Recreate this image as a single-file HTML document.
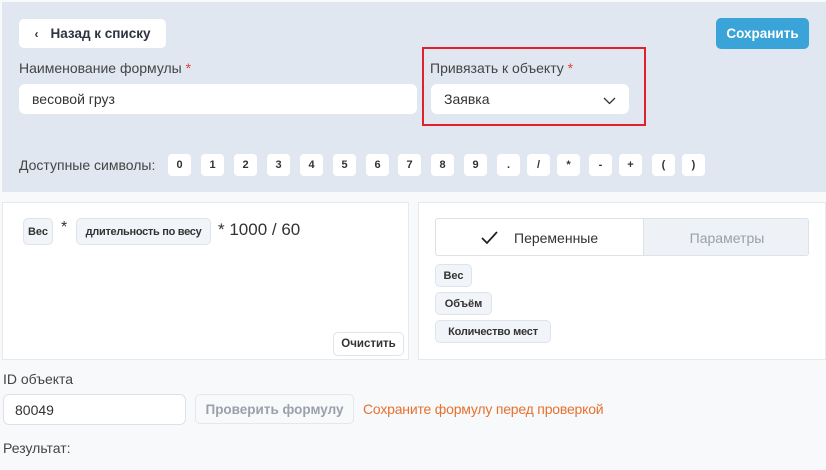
<!DOCTYPE html>
<html><head><meta charset="utf-8"><style>
*{box-sizing:border-box;margin:0;padding:0}
body{width:826px;height:470px;background:#f7f9fb;font-family:"Liberation Sans",sans-serif;color:#333;position:relative;overflow:hidden;font-size:14px}
.a{position:absolute}
.top{left:2px;top:2px;width:824px;height:190px;background:#e0e7f0}
.btn{background:#fff;border-radius:5px;display:flex;align-items:center;justify-content:center;font-weight:bold}
.inp{background:#fff;border-radius:6px;display:flex;align-items:center;padding-left:13px;font-size:14px;color:#333}
.lbl{font-size:14px;color:#444}
.lbl b{color:#e04040;font-weight:normal}
.sym{top:154px;width:23px;height:22px;background:#fff;border-radius:4px;font-size:11px;font-weight:bold;display:flex;align-items:center;justify-content:center;color:#333}
.chip{background:#f1f4f8;border:1px solid #dde4ec;border-radius:5px;font-size:11px;font-weight:bold;display:flex;align-items:center;justify-content:center;color:#333}
.panel{background:#fff;border:1px solid #e6eaef}
</style></head><body>
<div class="a top"></div>
<div class="a btn" style="left:19px;top:19px;width:147px;height:29px;font-size:13.5px;color:#2d3340"><span style="font-size:12px;margin-right:12px">‹</span>Назад к списку</div>
<div class="a btn" style="left:716px;top:18px;width:93px;height:31px;background:#3aa3d8;color:#fff;font-size:13.5px">Сохранить</div>
<div class="a lbl" style="left:19px;top:60px">Наименование формулы <b>*</b></div>
<div class="a inp" style="left:19px;top:84px;width:398px;height:30px">весовой груз</div>
<div class="a" style="left:422px;top:47px;width:224px;height:79px;border:2px solid #e0202a"></div>
<div class="a lbl" style="left:430px;top:60px">Привязать к объекту <b>*</b></div>
<div class="a inp" style="left:431px;top:84px;width:198px;height:30px">Заявка
<svg class="a" style="left:172px;top:13px" width="13" height="8" viewBox="0 0 13 8"><path d="M1 1l5.5 5.5L12 1" fill="none" stroke="#333" stroke-width="1.3"/></svg></div>
<div class="a lbl" style="left:19px;top:157px">Доступные символы:</div>
<div class="a sym" style="left:168px">0</div><div class="a sym" style="left:201px">1</div><div class="a sym" style="left:234px">2</div><div class="a sym" style="left:267px">3</div><div class="a sym" style="left:300px">4</div><div class="a sym" style="left:333px">5</div><div class="a sym" style="left:366px">6</div><div class="a sym" style="left:398px">7</div><div class="a sym" style="left:431px">8</div><div class="a sym" style="left:464px">9</div><div class="a sym" style="left:497px">.</div><div class="a sym" style="left:527px">/</div><div class="a sym" style="left:557px">*</div><div class="a sym" style="left:589px">-</div><div class="a sym" style="left:619px">+</div><div class="a sym" style="left:652px">(</div><div class="a sym" style="left:682px">)</div>

<div class="a panel" style="left:2px;top:202px;width:407px;height:158px"></div>
<div class="a chip" style="left:23px;top:218px;width:30px;height:27px">Вес</div>
<div class="a" style="left:61px;top:219px;font-size:16px">*</div>
<div class="a chip" style="left:76px;top:218px;width:135px;height:27px;letter-spacing:-0.3px">длительность по весу</div>
<div class="a" style="left:218px;top:220px;font-size:17px;color:#333">* 1000 / 60</div>
<div class="a btn" style="left:333px;top:332px;width:71px;height:24px;border:1px solid #dde4ec;font-size:11.5px">Очистить</div>

<div class="a panel" style="left:418px;top:202px;width:408px;height:158px"></div>
<div class="a" style="left:435px;top:218px;width:374px;height:38px;border:1px solid #dde2e8;border-radius:3px;background:#fff;overflow:hidden">
<div class="a" style="left:207px;top:0;width:167px;height:38px;background:#eef1f5;border-left:1px solid #dde2e8;color:#99a0aa;font-size:14px;display:flex;align-items:center;justify-content:center">Параметры</div>
<svg class="a" style="left:45px;top:12px" width="17" height="14" viewBox="0 0 17 14"><path d="M1 7l5 5L16 1" fill="none" stroke="#222" stroke-width="1.8"/></svg>
<div class="a" style="left:78px;top:11px;font-size:14px;color:#333">Переменные</div>
</div>
<div class="a chip" style="left:435px;top:264px;width:37px;height:23px">Вес</div>
<div class="a chip" style="left:435px;top:292px;width:57px;height:23px">Объём</div>
<div class="a chip" style="left:435px;top:320px;width:116px;height:23px;letter-spacing:-0.2px">Количество мест</div>

<div class="a lbl" style="left:3px;top:371px">ID объекта</div>
<div class="a inp" style="left:3px;top:394px;width:183px;height:31px;border:1px solid #dde2e8;padding-left:11px">80049</div>
<div class="a btn" style="left:195px;top:394px;width:159px;height:30px;background:#f7f9fb;border:1px solid #e4e8ed;color:#9aa1aa;font-size:13.5px">Проверить формулу</div>
<div class="a" style="left:363px;top:401px;color:#e8712f;font-size:14px;letter-spacing:-0.2px">Сохраните формулу перед проверкой</div>
<div class="a lbl" style="left:3px;top:440px">Результат:</div>
</body></html>
